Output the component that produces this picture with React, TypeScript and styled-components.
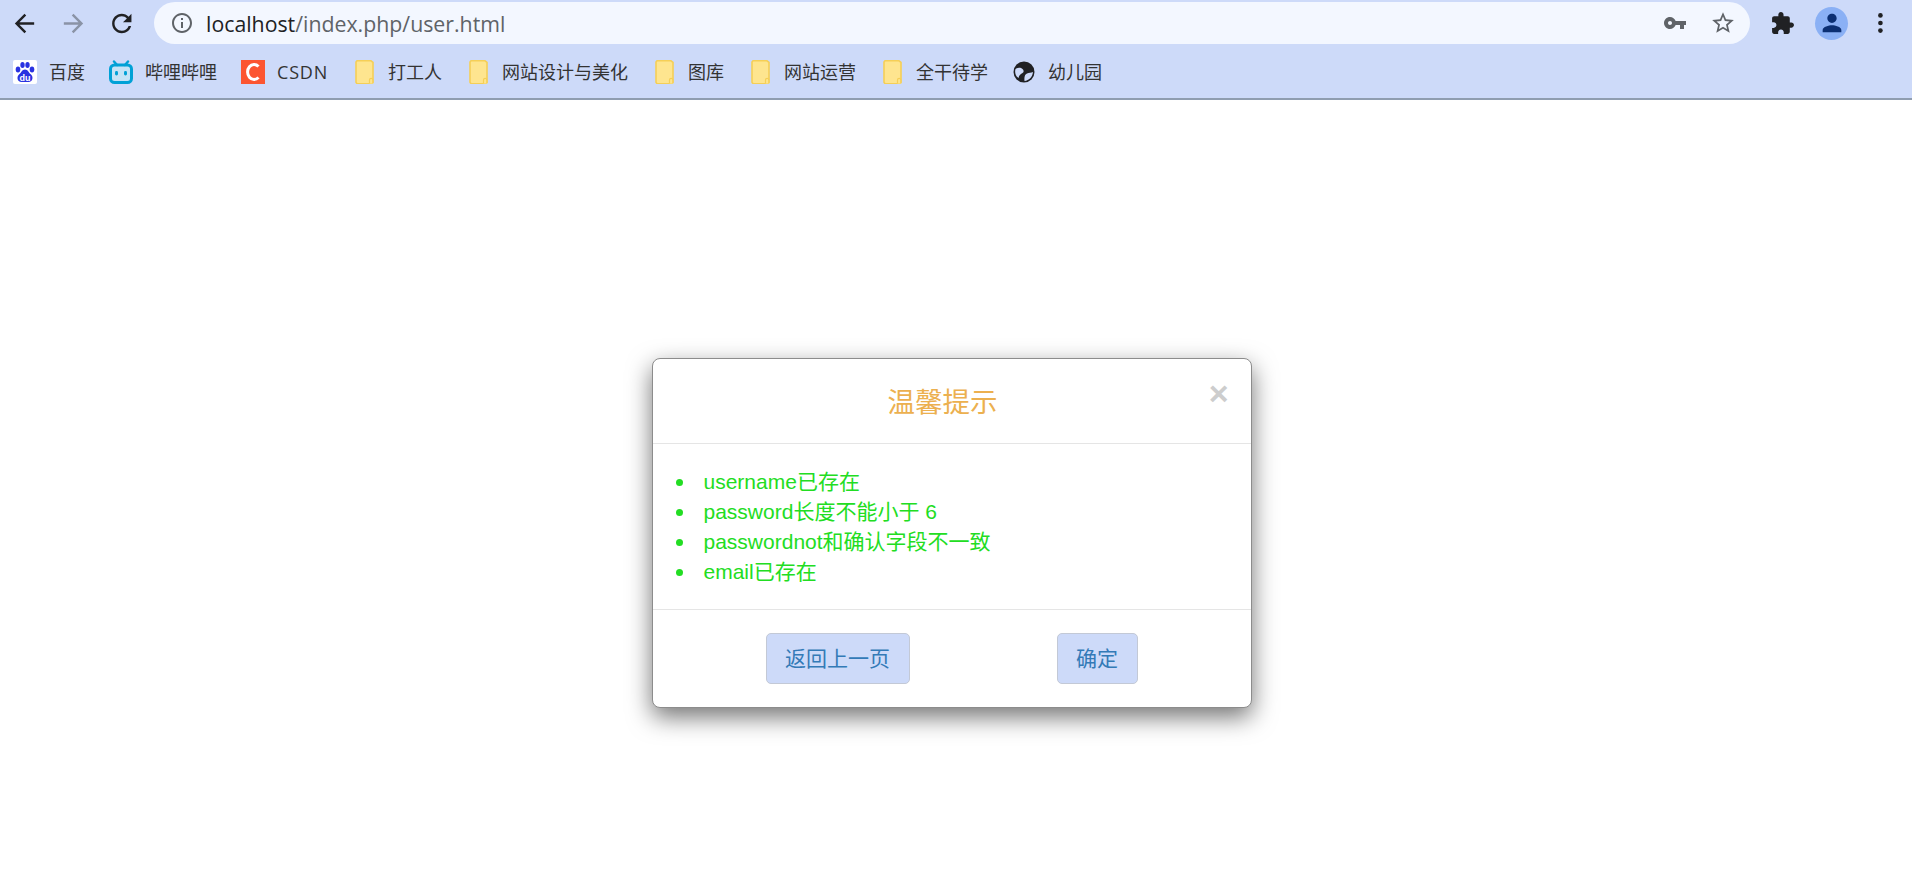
import React from "react"
import styled, {createGlobalStyle} from "styled-components"

const GlobalStyle = createGlobalStyle`
    html, body {
        margin: 0;
        padding: 0;
        background: #fff;
    }
`

const Page = styled.div`
    display: flex;
    flex-direction: column;
    height: 888px;
    overflow: hidden;
    font-family: "Liberation Sans", "Noto Sans CJK SC", sans-serif;
`

const Chrome = styled.header`
    flex: 0 0 100px;
    box-sizing: border-box;
    display: flex;
    flex-direction: column;
    background: #cddaf9;
    border-bottom: 2px solid #8f9db0;
`

const Toolbar = styled.div`
    flex: 0 0 46px;
    box-sizing: border-box;
    display: flex;
    align-items: flex-start;
    padding-top: 2px;
`

const ToolButton = styled.div`
    flex: 0 0 49px;
    display: flex;
    justify-content: center;
    align-items: center;
    height: 42px;
`

const Icon = styled.svg<{$size?: number; $color?: string}>`
    display: block;
    width: ${({$size}) => $size ?? 29}px;
    height: ${({$size}) => $size ?? 29}px;
    fill: ${({$color}) => $color ?? "#202124"};
    flex: 0 0 auto;
`

const AddressBar = styled.div`
    flex: 1;
    height: 42px;
    margin-left: 7px;
    display: flex;
    align-items: center;
    padding: 0 3px 0 16px;
    background: #f3f7ff;
    border-radius: 21px;
`

const Url = styled.div`
    flex: 1;
    margin-left: 12px;
    font-family: "Open Sans", "Noto Sans", sans-serif;
    font-size: 21.3px;
    color: #5f6368;

    b {
        font-weight: 400;
        color: #202124;
    }
`

const BarAction = styled.div`
    flex: 0 0 48px;
    display: flex;
    justify-content: center;
`

const Actions = styled.div`
    flex: 0 0 162px;
    box-sizing: border-box;
    padding-left: 8px;
    display: flex;
    align-items: center;
`

const Avatar = styled.div`
    width: 33px;
    height: 33px;
    border-radius: 50%;
    background: #8ab0f5;
    display: flex;
    justify-content: center;
    align-items: center;
`

const Bookmarks = styled.nav`
    flex: 1;
    display: flex;
    align-items: center;
    gap: 24px;
    padding-left: 13px;
`

const Bookmark = styled.a<{$spaced?: boolean}>`
    display: flex;
    align-items: center;
    gap: 12px;
    font-family: "Open Sans", "Noto Sans CJK SC", sans-serif;
    font-size: 18px;
    line-height: 24px;
    letter-spacing: ${({$spaced}) => ($spaced ? "0.8px" : "0")};
    color: #333;
`

const Stage = styled.main`
    flex: 1;
    display: flex;
    justify-content: center;
    align-items: flex-start;
    padding: 258px 9px 0 0;
`

const Modal = styled.section`
    position: relative;
    width: 600px;
    box-sizing: border-box;
    background: #fff;
    border: 1px solid #8c8c8c;
    border-radius: 8px;
    box-shadow: 0 9px 24px rgba(0, 0, 0, 0.55);
`

const ModalHeader = styled.div`
    height: 85px;
    box-sizing: border-box;
    display: flex;
    justify-content: center;
    align-items: center;
    padding: 0 18px 2px 0;
    border-bottom: 1px solid #e5e5e5;
`

const Title = styled.h4`
    margin: 0;
    font-size: 27.5px;
    font-weight: 400;
    color: #ecb04f;
`

const Close = styled.span`
    position: absolute;
    top: 16px;
    right: 22px;
    font-size: 34px;
    line-height: 36px;
    font-weight: 700;
    color: #cdcdcd;
`

const MessageList = styled.ul`
    margin: 0;
    padding: 23px 20px 22px 23px;
    list-style: none;
    border-bottom: 1px solid #e5e5e5;
    font-size: 21px;
    line-height: 30px;
    color: #22dd22;

    li {
        display: flex;
        align-items: center;
    }

    li::before {
        content: "";
        flex: 0 0 7px;
        height: 7px;
        margin-right: 21px;
        border-radius: 50%;
        background: #22dd22;
    }
`

const ModalFooter = styled.div`
    height: 97px;
    box-sizing: border-box;
    display: flex;
    justify-content: center;
    gap: 147px;
    padding-top: 23px;
`

const FooterButton = styled.button`
    height: 51px;
    padding: 0 18.5px 3px;
    background: #cddaf9;
    border: 1px solid #c3c9d6;
    border-radius: 5px;
    font-family: inherit;
    font-size: 21px;
    color: #337ab7;
`

const Folder: React.FC = () => (
    <Icon viewBox="0 0 24 24" $size={24} $color="#fee58f">
        <path d="M5 .8h14l2 1.500v20l-2 1.500H5l-1-1.500V2z" stroke="#f5cf57" strokeWidth="1.6" />
        <path d="M17.500 23.500v-3.500a1.300 1.300 0 0 1 3.300 0v3.500" fill="#fee58f" stroke="#f5cf57" strokeWidth="1.2" />
    </Icon>
)

const folders = ["打工人", "网站设计与美化", "图库", "网站运营", "全干待学"]

const App: React.FC = () => {
    return (
        <Page>
            <GlobalStyle />
            <Chrome>
                <Toolbar>
                    <ToolButton>
                        <Icon viewBox="0 0 24 24"><path d="M20 11H7.83l5.59-5.59L12 4l-8 8 8 8 1.41-1.41L7.83 13H20v-2z" /></Icon>
                    </ToolButton>
                    <ToolButton>
                        <Icon viewBox="0 0 24 24" $color="#8a93a6"><path d="M12 4l-1.41 1.41L16.17 11H4v2h12.17l-5.58 5.59L12 20l8-8z" /></Icon>
                    </ToolButton>
                    <ToolButton>
                        <Icon viewBox="0.6 0 24 24"><path d="M17.65 6.35C16.2 4.9 14.21 4 12 4c-4.42 0-7.99 3.58-7.99 8s3.57 8 7.99 8c3.73 0 6.84-2.55 7.73-6h-2.08c-.82 2.33-3.04 4-5.65 4-3.31 0-6-2.69-6-6s2.69-6 6-6c1.66 0 3.14.69 4.22 1.78L13 11h7V4l-2.35 2.35z" /></Icon>
                    </ToolButton>
                    <AddressBar>
                        <Icon viewBox="0 0 24 24" $size={24} $color="#5f6368"><path d="M11 7h2v2h-2zm0 4h2v6h-2zm1-9C6.48 2 2 6.48 2 12s4.48 10 10 10 10-4.48 10-10S17.52 2 12 2zm0 18c-4.41 0-8-3.59-8-8s3.59-8 8-8 8 3.59 8 8-3.59 8-8 8z" /></Icon>
                        <Url><b>localhost</b>/index.php/user.html</Url>
                        <BarAction>
                            <Icon viewBox="0 0 24 24" $size={24} $color="#5f6368"><path d="M12.65 10C11.83 7.67 9.61 6 7 6c-3.31 0-6 2.69-6 6s2.69 6 6 6c2.61 0 4.83-1.67 5.65-4H17v4h4v-4h2v-4H12.65zM7 14c-1.1 0-2-.9-2-2s.9-2 2-2 2 .9 2 2-.9 2-2 2z" /></Icon>
                        </BarAction>
                        <BarAction>
                            <Icon viewBox="0 0 24 24" $size={26} $color="#5f6368"><path d="M22 9.24l-7.19-.62L12 2 9.19 8.63 2 9.24l5.46 4.73L5.82 21 12 17.27 18.18 21l-1.63-7.03L22 9.24zM12 15.4l-3.76 2.27 1-4.28-3.32-2.88 4.38-.38L12 6.1l1.71 4.04 4.38.38-3.32 2.88 1 4.28L12 15.4z" /></Icon>
                        </BarAction>
                    </AddressBar>
                    <Actions>
                        <ToolButton>
                            <Icon viewBox="0 0 24 24" $size={25}><path d="M20.5 11H19V7c0-1.1-.9-2-2-2h-4V3.5C13 2.12 11.88 1 10.5 1S8 2.12 8 3.5V5H4c-1.1 0-1.99.9-1.99 2v3.8H3.5c1.49 0 2.7 1.21 2.7 2.7s-1.21 2.7-2.7 2.7H2V20c0 1.1.9 2 2 2h3.8v-1.5c0-1.49 1.21-2.7 2.7-2.7 1.49 0 2.7 1.21 2.7 2.7V22H17c1.1 0 2-.9 2-2v-4h1.5c1.38 0 2.5-1.12 2.5-2.5S21.88 11 20.5 11z" /></Icon>
                        </ToolButton>
                        <ToolButton>
                            <Avatar>
                                <Icon viewBox="0 0 24 24" $size={28} $color="#0b2f73"><path d="M12 12c2.21 0 4-1.79 4-4s-1.79-4-4-4-4 1.79-4 4 1.79 4 4 4zm0 2c-2.67 0-8 1.34-8 4v2h16v-2c0-2.66-5.33-4-8-4z" /></Icon>
                            </Avatar>
                        </ToolButton>
                        <ToolButton>
                            <Icon viewBox="0 0 24 24" $size={28}>
                                <circle cx="11.500" cy="5.500" r="2" />
                                <circle cx="11.500" cy="12" r="2" />
                                <circle cx="11.500" cy="18.500" r="2" />
                            </Icon>
                        </ToolButton>
                    </Actions>
                </Toolbar>
                <Bookmarks>
                    <Bookmark>
                        <Icon viewBox="0 0 24 24" $size={24} $color="#2932e1">
                            <rect width="24" height="24" rx="2" fill="#fff" />
                            <ellipse cx="5" cy="9.500" rx="2.300" ry="3" />
                            <ellipse cx="9.500" cy="5" rx="2.200" ry="3" />
                            <ellipse cx="14.500" cy="5" rx="2.200" ry="3" />
                            <ellipse cx="19" cy="9.500" rx="2.300" ry="3" />
                            <path d="M12 9.500c-3 0-3.500 3-6 5-2.500 2-2 7.500 2.500 7.500h7c4.500 0 5-5.500 2.500-7.500-2.500-2-3-5-6-5z" />
                            <text x="12" y="20.500" textAnchor="middle" fontFamily="Liberation Sans" fontSize="9" fontWeight="700" fill="#fff">du</text>
                        </Icon>
                        百度
                    </Bookmark>
                    <Bookmark>
                        <Icon viewBox="0 0 24 24" $size={24} $color="none">
                            <rect x="1.500" y="5" width="21" height="17.500" rx="4" stroke="#00a1d6" strokeWidth="3" fill="#c5e3f6" />
                            <path d="M8 5L5 1.500M16 5l3-3.500" stroke="#00a1d6" strokeWidth="2.400" strokeLinecap="round" />
                            <rect x="6" y="11" width="3" height="4.500" rx="1.400" fill="#00a1d6" />
                            <rect x="15" y="11" width="3" height="4.500" rx="1.400" fill="#00a1d6" />
                        </Icon>
                        哔哩哔哩
                    </Bookmark>
                    <Bookmark $spaced>
                        <Icon viewBox="0 0 24 24" $size={24} $color="#fc5531">
                            <rect width="24" height="24" />
                            <path d="M17.500 6.500A6.500 7.500 0 1 0 17.500 17.500" fill="none" stroke="#fff" strokeWidth="3" />
                        </Icon>
                        CSDN
                    </Bookmark>
                    {folders.map(name => (
                        <Bookmark key={name}>
                            <Folder />
                            {name}
                        </Bookmark>
                    ))}
                    <Bookmark>
                        <Icon viewBox="0 0 24 24" $size={24} $color="#202124">
                            <circle cx="12" cy="12" r="10.500" />
                            <path d="M3.500 9c2.500-2 5.500-1.500 7 0s1.500 3 0 4-3.500 2-4 5C3.500 16 2.500 12 3.500 9zM21 12c-2 1-4 .5-6 1.500s-3 3-2.500 7.500c4.500-.5 8-4 8.500-9z" fill="#cddaf9" />
                        </Icon>
                        幼儿园
                    </Bookmark>
                </Bookmarks>
            </Chrome>
            <Stage>
                <Modal>
                    <ModalHeader>
                        <Title>温馨提示</Title>
                        <Close>×</Close>
                    </ModalHeader>
                    <MessageList>
                        <li>username已存在</li>
                        <li>password长度不能小于 6</li>
                        <li>passwordnot和确认字段不一致</li>
                        <li>email已存在</li>
                    </MessageList>
                    <ModalFooter>
                        <FooterButton>返回上一页</FooterButton>
                        <FooterButton>确定</FooterButton>
                    </ModalFooter>
                </Modal>
            </Stage>
        </Page>
    )
}

export default App
